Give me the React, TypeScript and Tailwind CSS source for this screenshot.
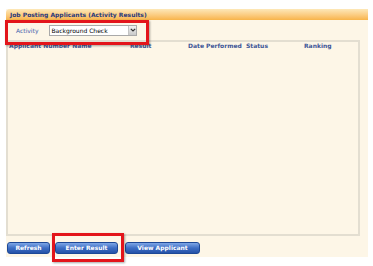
import React from "react";

const font = { fontFamily: '"DejaVu Sans", Verdana, sans-serif' };

const columns = ["Applicant Number Name", "Result", "Date Performed", "Status", "Ranking"];

function BlueButton({ label, width }: { label: string; width: string }) {
  return (
    <button
      className={`${width} h-[12px] rounded-[3px] border border-[#1d4896] bg-gradient-to-b from-[#7ea6e6] via-[#3e6ec4] to-[#2552a8] text-[6px] font-bold leading-[10px] text-white`}
    >
      {label}
    </button>
  );
}

export default function App() {
  return (
    <div className="relative w-[373px] h-[266px] bg-white pt-[9px] pl-[6px]" style={font}>
      <div className="w-[362px] h-[248px] bg-[#fdf6e7] flex flex-col">
        <div className="h-[11px] rounded-tl-[4px] bg-gradient-to-b from-[#fde8b8] to-[#f8b448] pl-[4px] text-[6px] font-bold leading-[11px] text-[#2b3a7c]">
          Job Posting Applicants (Activity Results)
        </div>

        <div className="h-[20px] flex items-center pl-[10px] gap-[11px]">
          <span className="text-[6px] text-[#4562ad]">Activity</span>
          <div className="flex h-[11px] w-[88px] items-center border border-[#a9a9a9] bg-white">
            <span className="flex-1 pl-[1px] text-[6px] leading-[9px] text-black">Background Check</span>
            <span className="flex h-[9px] w-[8px] items-center justify-center border-l border-[#c4c4c4] bg-gradient-to-b from-[#f2f2f2] to-[#c9c9c9]">
              <svg width="6" height="4" viewBox="0 0 6 4">
                <path d="M0.8 0.8 L3 3 L5.2 0.8" stroke="#333" strokeWidth="1.2" fill="none" />
              </svg>
            </span>
          </div>
        </div>

        <div className="h-[196px] w-[354px] border-2 border-[#e3ded1] pl-[1px]">
          <div className="grid grid-cols-[121px_58px_58px_58px_1fr] text-[6px] font-bold leading-[7px] text-[#3c5597]">
            {columns.map((c) => (
              <span key={c}>{c}</span>
            ))}
          </div>
        </div>

        <div className="mt-[6px] flex gap-[5px] pl-[1px]">
          <BlueButton label="Refresh" width="w-[43px]" />
          <div className="flex gap-[7px]">
            <BlueButton label="Enter Result" width="w-[63px]" />
            <BlueButton label="View Applicant" width="w-[75px]" />
          </div>
        </div>
      </div>

      <div className="absolute left-[5px] top-[20px] h-[25px] w-[144px] border-[3px] border-[#e3151b] shadow-[1px_1px_2px_rgba(0,0,0,0.35)]" />
      <div className="absolute left-[52px] top-[233px] h-[29px] w-[72px] border-[3px] border-[#e3151b] shadow-[1px_1px_2px_rgba(0,0,0,0.35)]" />
    </div>
  );
}
